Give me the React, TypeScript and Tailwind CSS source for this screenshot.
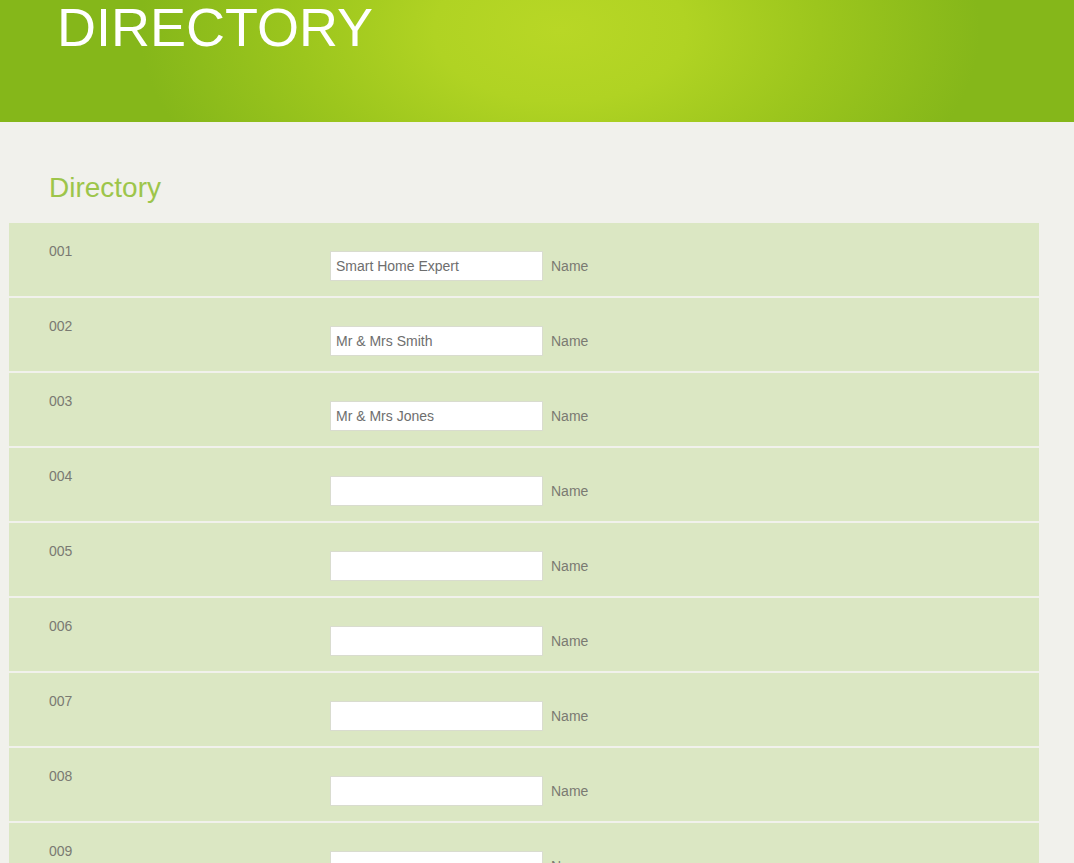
const entries = [
  { id: "001", value: "Smart Home Expert" },
  { id: "002", value: "Mr & Mrs Smith" },
  { id: "003", value: "Mr & Mrs Jones" },
  { id: "004", value: "" },
  { id: "005", value: "" },
  { id: "006", value: "" },
  { id: "007", value: "" },
  { id: "008", value: "" },
  { id: "009", value: "" },
  { id: "010", value: "" },
]

function Row({ id, value }: { id: string; value: string }) {
  return (
    <div className="flex h-[73px] bg-[#dbe7c3] mb-[2px]">
      <div className="w-[321px] shrink-0 pl-10 pt-[20px] text-[14px] leading-[17px] text-[#7a7a72]">{id}</div>
      <div className="flex items-center pt-7 self-start gap-[8px]">
        <input
          type="text"
          defaultValue={value}
          className="w-[213px] h-[30px] bg-white border border-[#d9dccf] px-[5px] text-[14px] text-[#6e6e6e] outline-none"
        />
        <span className="text-[14px] text-[#7a7a72]">Name</span>
      </div>
    </div>
  )
}

export default function App() {
  return (
    <div className="min-h-screen bg-[#f1f1ec] font-['Liberation_Sans',Arial,sans-serif]">
      <header className="h-[122px] overflow-hidden bg-[radial-gradient(ellipse_420px_240px_at_560px_30px,#b8d726_0%,#b0d323_30%,#9cc61d_62%,#85b71a_100%)]">
        <h1 className="ml-[57px] mt-[-1px] text-[54px] leading-[56px] text-white">DIRECTORY</h1>
      </header>
      <main className="pt-[50px]">
        <h2 className="ml-[49px] text-[28px] leading-[32px] text-[#9dc54a] mb-[19px]">Directory</h2>
        <div className="ml-[9px] w-[1030px]">
          {entries.map((e) => (
            <Row key={e.id} id={e.id} value={e.value} />
          ))}
        </div>
      </main>
    </div>
  )
}
